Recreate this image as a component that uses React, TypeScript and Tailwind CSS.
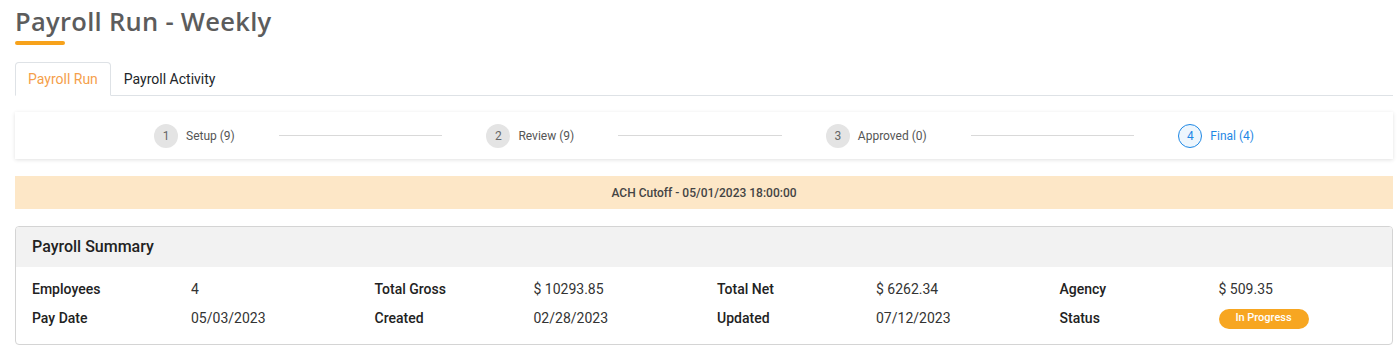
import React from 'react'

const steps = [
    { n: 1, label: 'Setup (9)' },
    { n: 2, label: 'Review (9)' },
    { n: 3, label: 'Approved (0)' },
    { n: 4, label: 'Final (4)', active: true },
]

const summary = [
    [
        ['Employees', '4'],
        ['Pay Date', '05/03/2023'],
    ],
    [
        ['Total Gross', '$ 10293.85'],
        ['Created', '02/28/2023'],
    ],
    [
        ['Total Net', '$ 6262.34'],
        ['Updated', '07/12/2023'],
    ],
    [
        ['Agency', '$ 509.35'],
        ['Status', 'badge'],
    ],
]

export default function App() {
    return (
        <div className="min-h-[353px] bg-white px-[15px] pt-[6px] font-['Roboto',sans-serif] w-[1408px]">
            <div className="w-[1378px]">
                {/*title*/}
                <h1 className="font-['Open_Sans',sans-serif] text-[25.5px] font-semibold leading-[30px] tracking-[0.3px] text-[#5c5c5c]">
                    Payroll Run - Weekly
                </h1>
                <div className="mt-[5px] h-[4px] w-[50px] rounded-full bg-[#f7a21b]" />

                {/*tabs*/}
                <div className="mt-[17px] flex items-end border-b border-[#dee2e6]">
                    <div className="-mb-px rounded-t-[4px] border border-[#dee2e6] border-b-white bg-white px-[12px] py-[6px] text-[14px] leading-[20px] text-[#f5a04a]">
                        Payroll Run
                    </div>
                    <div className="px-[13px] py-[6px] text-[14px] leading-[20px] text-[#212529]">
                        Payroll Activity
                    </div>
                </div>

                {/*stepper*/}
                <div className="mt-[16px] flex h-[47px] items-center bg-white px-[139px] shadow-[0_1px_4px_rgba(0,0,0,0.12)]">
                    {steps.map((s, i) => (
                        <React.Fragment key={s.n}>
                            <div className="flex shrink-0 items-center gap-[8px]">
                                <span
                                    className={
                                        s.active
                                            ? 'flex h-[24px] w-[24px] items-center justify-center rounded-full border border-[#1e88e5] bg-[#eef6fd] text-[12px] text-[#1e88e5]'
                                            : 'flex h-[24px] w-[24px] items-center justify-center rounded-full bg-[#e4e4e4] text-[12px] text-[#666]'
                                    }
                                >
                                    {s.n}
                                </span>
                                <span
                                    className={
                                        s.active
                                            ? 'text-[12px] text-[#1e88e5]'
                                            : 'text-[12px] text-[#555]'
                                    }
                                >
                                    {s.label}
                                </span>
                            </div>
                            {i < steps.length - 1 && (
                                <div className="mx-[44px] h-px flex-1 bg-[#d9d9d9]" />
                            )}
                        </React.Fragment>
                    ))}
                </div>

                {/*ach banner*/}
                <div className="mt-[17px] flex h-[33px] items-center justify-center bg-[#fde7c7] text-[12px] font-medium text-[#444]">
                    ACH Cutoff - 05/01/2023 18:00:00
                </div>

                {/*summary card*/}
                <div className="mt-[17px] overflow-hidden rounded-[4px] border border-[#d4d4d4]">
                    <div className="flex h-[40px] items-center bg-[#f2f2f2] px-[16px] text-[16px] font-medium text-[#222]">
                        Payroll Summary
                    </div>
                    <div className="flex px-[16px] pb-[11px] pt-[8px]">
                        {summary.map((col, ci) => (
                            <div key={ci} className="flex w-[342.5px] shrink-0 flex-col">
                                {col.map(([label, value]) => (
                                    <div key={label} className="flex h-[29px] items-center text-[14px]">
                                        <span className="w-[159px] shrink-0 font-medium text-[#222]">
                                            {label}
                                        </span>
                                        {value === 'badge' ? (
                                            <span className="flex h-[20px] w-[90px] items-center justify-center rounded-full bg-[#f7a621] text-[11px] font-medium text-white">
                                                In Progress
                                            </span>
                                        ) : (
                                            <span className="text-[#333]">{value}</span>
                                        )}
                                    </div>
                                ))}
                            </div>
                        ))}
                    </div>
                </div>
            </div>
        </div>
    )
}
